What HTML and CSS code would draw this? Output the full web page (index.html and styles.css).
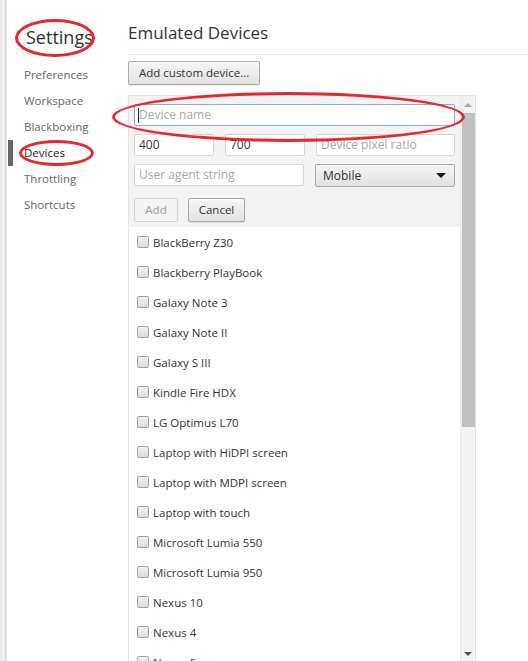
FILE: index.html
```html
<!DOCTYPE html>
<html>
<head>
<meta charset="utf-8">
<link rel="stylesheet" href="styles.css">
</head>
<body>
<div class="edge"></div>
<aside class="sidebar">
  <div class="title">Settings</div>
  <ul class="nav">
    <li class="nav-item">Preferences</li>
    <li class="nav-item">Workspace</li>
    <li class="nav-item">Blackboxing</li>
    <li class="nav-item selected">Devices</li>
    <li class="nav-item">Throttling</li>
    <li class="nav-item">Shortcuts</li>
  </ul>
</aside>
<main class="main">
  <header class="header">Emulated Devices</header>
  <button class="btn add-custom">Add custom device...</button>
  <section class="panel">
    <div class="content">
      <div class="form">
        <div class="row"><div class="input focus w-full"><span class="caret"></span><span class="ph">Device name</span></div></div>
        <div class="row gap11">
          <div class="input w80">400</div>
          <div class="input w80">700</div>
          <div class="input w139"><span class="ph">Device pixel ratio</span></div>
        </div>
        <div class="row gap11">
          <div class="input w170"><span class="ph">User agent string</span></div>
          <div class="select">Mobile<span class="tri"></span></div>
        </div>
        <div class="row gap10 btn-row">
          <button class="btn small disabled">Add</button>
          <button class="btn small cancel">Cancel</button>
        </div>
      </div>
      <ul class="list">
        <li class="item"><span class="cb"></span>BlackBerry Z30</li>
        <li class="item"><span class="cb"></span>Blackberry PlayBook</li>
        <li class="item"><span class="cb"></span>Galaxy Note 3</li>
        <li class="item"><span class="cb"></span>Galaxy Note II</li>
        <li class="item"><span class="cb"></span>Galaxy S III</li>
        <li class="item"><span class="cb"></span>Kindle Fire HDX</li>
        <li class="item"><span class="cb"></span>LG Optimus L70</li>
        <li class="item"><span class="cb"></span>Laptop with HiDPI screen</li>
        <li class="item"><span class="cb"></span>Laptop with MDPI screen</li>
        <li class="item"><span class="cb"></span>Laptop with touch</li>
        <li class="item"><span class="cb"></span>Microsoft Lumia 550</li>
        <li class="item"><span class="cb"></span>Microsoft Lumia 950</li>
        <li class="item"><span class="cb"></span>Nexus 10</li>
        <li class="item"><span class="cb"></span>Nexus 4</li>
        <li class="item"><span class="cb"></span>Nexus 5</li>
      </ul>
    </div>
    <div class="scrollbar">
      <span class="arrow up"></span>
      <div class="thumb"></div>
      <div class="track-rest"></div>
      <span class="arrow down"></span>
    </div>
  </section>
</main>
<div class="ring ring-settings"></div>
<div class="ring ring-devices"></div>
<div class="ring ring-name"></div>
</body>
</html>
```

FILE: styles.css
```css
html, body {
  margin: 0;
  padding: 0;
  height: 661px;
  overflow: hidden;
  background: #fff;
}
body {
  display: flex;
  font-family: "Open Sans", "Noto Sans", sans-serif;
  font-size: 11.5px;
  color: #333;
  position: relative;
}
.edge {
  width: 7px;
  flex: none;
  background: linear-gradient(to right, #e9e9e9, #f4f4f4 60%, #dcdcdc);
  border-right: 1px solid #e2e2e2;
  box-sizing: border-box;
}
.sidebar {
  width: 121px;
  flex: none;
}
.title {
  font-size: 18px;
  line-height: 26px;
  padding: 24px 0 0 19px;
  color: #303030;
  margin-bottom: 12px;
}
.nav {
  list-style: none;
  margin: 0;
  padding: 0;
}
.nav-item {
  height: 26px;
  line-height: 26px;
  margin-left: 1px;
  padding-left: 11px;
  border-left: 5px solid transparent;
  color: #666;
  font-size: 11.5px;
}
.nav-item.selected {
  border-left-color: #666;
  color: #222;
}
.main {
  flex: 1;
  display: flex;
  flex-direction: column;
  align-items: flex-start;
}
.header {
  align-self: stretch;
  font-size: 17px;
  line-height: 24px;
  padding: 21px 0 9px 0;
  border-bottom: 1px solid #e8e8e8;
  color: #333;
}
.btn {
  font-family: inherit;
  font-size: 11.5px;
  color: #333;
  background: linear-gradient(#f6f6f6, #e2e2e2);
  border: 1px solid #a9a9a9;
  border-radius: 2px;
  box-shadow: 0 1px 1px rgba(0,0,0,0.08);
  padding: 0 10px;
  margin: 0;
  height: 24px;
  line-height: 20px;
  white-space: nowrap;
}
.add-custom {
  margin-top: 6px;
  min-width: 130px;
}
.panel {
  margin-top: 10px;
  width: 348px;
  flex: 1;
  display: flex;
  border: 1px solid #e3e3e3;
  border-bottom: none;
  box-sizing: border-box;
  overflow: hidden;
}
.content {
  flex: 1;
  display: flex;
  flex-direction: column;
  overflow: hidden;
}
.form {
  background: #f3f3f3;
  padding: 8px 5px 5px 5px;
  display: flex;
  flex-direction: column;
  gap: 8px;
}
.row {
  display: flex;
}
.gap11 { gap: 11px; }
.gap10 { gap: 10px; }
.btn-row { margin-top: 3px; }
.input {
  height: 22px;
  box-sizing: border-box;
  background: #fff;
  border: 1px solid #d5d5d5;
  border-radius: 2px;
  padding: 0 4px;
  line-height: 20px;
  font-size: 12px;
  color: #333;
  display: flex;
  align-items: center;
  white-space: nowrap;
}
.input.focus {
  border-color: #87a7dd;
  padding-left: 3px;
}
.caret {
  width: 1px;
  height: 15px;
  background: #222;
}
.ph { color: #a8a8a8; }
.w-full { width: 322px; }
.w80 { width: 80px; }
.w139 { width: 139px; }
.w170 { width: 170px; }
.select {
  width: 140px;
  height: 23px;
  box-sizing: border-box;
  border: 1px solid #a9a9a9;
  border-radius: 2px;
  background: linear-gradient(#f5f5f5, #e1e1e1);
  padding: 0 7px;
  font-size: 12px;
  line-height: 21px;
  color: #333;
  display: flex;
  align-items: center;
  justify-content: space-between;
}
.tri {
  width: 0;
  height: 0;
  border-left: 5px solid transparent;
  border-right: 5px solid transparent;
  border-top: 5px solid #111;
  margin-right: 1px;
}
.btn.small {
  padding: 0;
}
.btn.disabled {
  width: 44px;
  color: #a0a0a0;
  border-color: #d4d4d4;
  background: #f3f3f3;
  box-shadow: none;
}
.btn.cancel { width: 57px; }
.list {
  list-style: none;
  margin: 0;
  padding: 0;
  background: #fff;
}
.item {
  height: 30px;
  display: flex;
  align-items: center;
  padding-left: 8px;
  font-size: 11.5px;
  color: #333;
  white-space: nowrap;
}
.cb {
  width: 12px;
  height: 12px;
  box-sizing: border-box;
  border: 1px solid #a3a3a3;
  border-radius: 2px;
  background: linear-gradient(#f0f0f0, #dcdcdc);
  margin-right: 4px;
  flex: none;
}
.scrollbar {
  width: 15px;
  flex: none;
  background: #f1f1f1;
  display: flex;
  flex-direction: column;
  align-items: center;
  border-left: 1px solid #ebebeb;
  box-sizing: border-box;
}
.arrow {
  width: 0;
  height: 0;
  border-left: 4px solid transparent;
  border-right: 4px solid transparent;
  flex: none;
}
.arrow.up {
  border-bottom: 4px solid #a3a3a3;
  margin: 7px 0 6px;
}
.arrow.down {
  border-top: 4px solid #505050;
  margin: 4px 0 5px;
}
.thumb {
  width: 13px;
  height: 314px;
  background: #c1c1c1;
  flex: none;
}
.track-rest { flex: 1; }
.ring {
  position: absolute;
  border: 3px solid #e8262c;
  border-radius: 50%;
  box-sizing: border-box;
  pointer-events: none;
}
.ring-settings {
  left: 15px;
  top: 19px;
  width: 80px;
  height: 38px;
}
.ring-devices {
  left: 19px;
  top: 140px;
  width: 75px;
  height: 26px;
}
.ring-name {
  left: 112px;
  top: 92px;
  width: 353px;
  height: 50px;
}
```
